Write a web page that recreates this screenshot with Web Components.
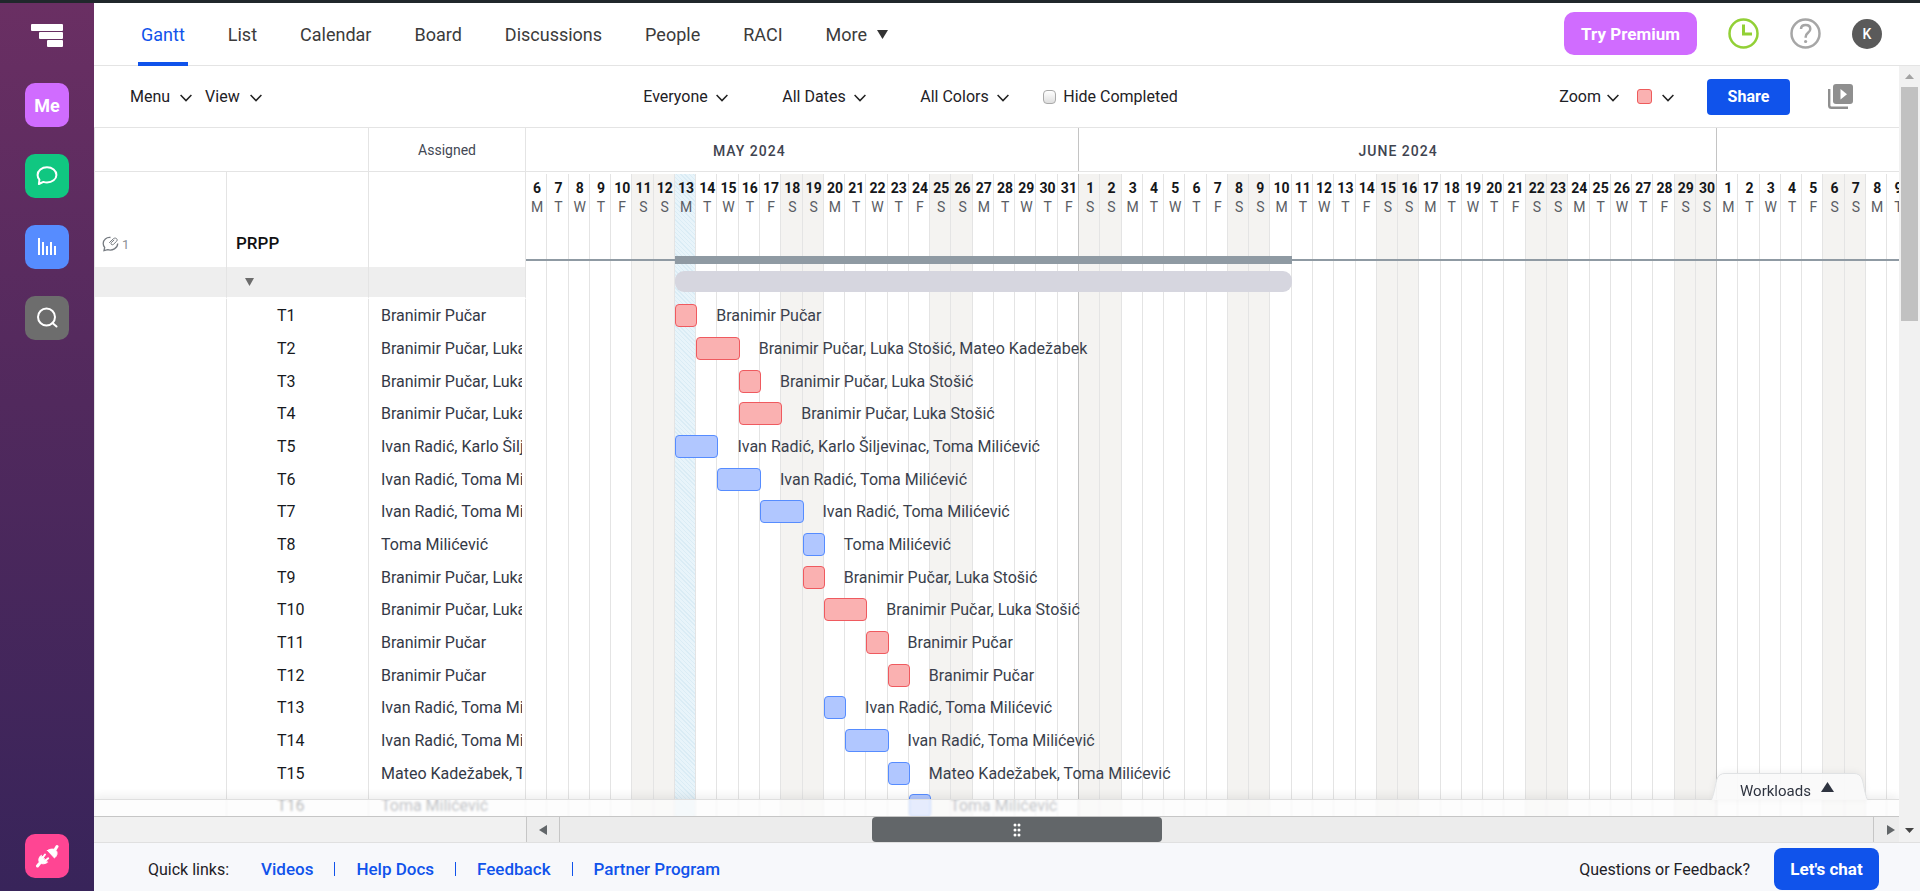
<!DOCTYPE html>
<html lang="en">
<head>
<meta charset="utf-8">
<meta name="viewport" content="width=device-width, initial-scale=1">
<title>PRPP – Gantt</title>
<style>
  html, body { margin: 0; height: 100%; }
  body {
    font-family: Roboto, "Open Sans", sans-serif;
    font-size: 16px;
    color: #2c3038;
    --line: #e4e4e4;
    --line-strong: #c4c4c4;
    --blue: #1053eb;
    --violet: #d06cff;
  }
</style>
</head>
<body>
<app-shell>
  <side-rail slot="rail">
    <rail-item label="My work" style="--tile:#d06cff">Me</rail-item>
    <rail-item label="Discussions" style="--tile:#10c781">
      <svg width="22" height="22" viewBox="0 0 22 22" fill="none" stroke="#fff" stroke-width="2" stroke-linejoin="round"><path d="M3.4 14.6C2.2 13.2 1.6 11.600 1.600 9.900 1.600 5.600 5.800 2.300 11 2.300s9.400 3.300 9.400 7.600-4.200 7.600-9.400 7.600c-1.300 0-2.500-.2-3.600-.6L2.900 19l.5-4.400z"/></svg>
    </rail-item>
    <rail-item label="Workload" style="--tile:#568cff">
      <svg width="20" height="20" viewBox="0 0 20 20" fill="#fff"><path d="M1 1h2v17H1zM5 5h2v13H5zM9 9h2v9H9zM13 5h2v13h-2zM17 9h2v9h-2z"/></svg>
    </rail-item>
    <rail-item label="Search" style="--tile:#6d6d6d">
      <svg width="22" height="22" viewBox="0 0 22 22" fill="none" stroke="#fff" stroke-width="2" stroke-linecap="round"><circle cx="10.500" cy="10" r="8.500"/><path d="M16.500 16l4 3.500"/></svg>
    </rail-item>
    <rail-item slot="end" label="Integrations" style="--tile:#ff4593">
      <svg width="24" height="24" viewBox="0 0 24 24" fill="#fff" stroke="#fff" stroke-width="2" stroke-linecap="round" stroke-linejoin="round"><path d="M12.500 6.500l7 7.500c2.600-2 3.300-5.200 1.800-7.300-1.600-2-5.600-2.300-8.800-.2z" stroke-width="1"/><path d="M20.500 5L22 2.500" stroke-width="3"/><path d="M6 11.500c-2.700 2-2.700 5.700-1.200 7.200s5.200 1.600 7.500-.2z" stroke-width="1"/><path d="M4.500 19.500L2.500 22" stroke-width="3"/><path d="M7.500 14l2.500-3.500M10 17l3.200-2.700"/></svg>
    </rail-item>
  </side-rail>
  <top-nav slot="nav"></top-nav>
  <tool-bar slot="tools"></tool-bar>
  <gantt-board slot="board"></gantt-board>
  <page-footer slot="footer"></page-footer>
</app-shell>

<script>
const RESET = `:host,*,*::before,*::after{box-sizing:border-box}
  button,select{font:inherit;color:inherit;background:none;border:0;padding:0;margin:0;cursor:pointer}
  a{text-decoration:none;color:inherit} svg{display:block;flex:none}`;

function define(name, css, html, setup) {
  const template = document.createElement('template');
  template.innerHTML = `<style>${RESET}${css}</style>${html}`;
  customElements.define(name, class extends HTMLElement {
    constructor() {
      super();
      this.attachShadow({ mode: 'open' }).append(template.content.cloneNode(true));
    }
    connectedCallback() { if (setup) setup(this, this.shadowRoot); }
  });
}

/* ---------- frame ---------- */
define('app-shell', `
  :host{display:flex;flex-direction:column;height:100vh;border-top:3px solid #20272b;overflow:hidden;background:#fff}
  .body{flex:1;min-height:0;display:grid;grid-template-columns:94px minmax(0,1fr)}
  .main{display:flex;flex-direction:column;min-height:0}
  .work{flex:1;min-height:0;display:grid;grid-template-columns:minmax(0,1fr) 21px}
  .pane{display:flex;flex-direction:column;min-height:0}
  slot[name=board]::slotted(*){flex:1;min-height:0}`,
  `<div class="body"><slot name="rail"></slot>
    <div class="main"><slot name="nav"></slot>
      <div class="work"><div class="pane"><slot name="tools"></slot><slot name="board"></slot><time-scroller></time-scroller></div><page-scroller></page-scroller></div>
      <slot name="footer"></slot></div></div>`);

define('side-rail', `
  :host{display:flex;flex-direction:column;align-items:center;padding:21px 0 13px;background:linear-gradient(#6a2f63,#51295d 45%,#38245a)}
  a{margin-bottom:36px}
  nav{display:flex;flex-direction:column;gap:27px}
  .end{margin-top:auto}`,
  `<a href="#" aria-label="Home"><svg width="32" height="23" viewBox="0 0 32 23" fill="#fff"><rect width="32" height="7" rx="1"/><rect x="8" y="8" width="24" height="7" rx="1"/><rect x="16" y="16" width="16" height="7" rx="1"/></svg></a>
   <nav><slot></slot></nav><div class="end"><slot name="end"></slot></div>`);

define('rail-item', `
  :host{display:block}
  button{display:flex;align-items:center;justify-content:center;width:44px;height:44px;border-radius:10px;background:var(--tile);color:#fff;font-size:18px;font-weight:700}`,
  `<button type="button"><slot></slot></button>`,
  (el, root) => root.querySelector('button').setAttribute('aria-label', el.getAttribute('label')));

/* ---------- top navigation ---------- */
define('top-nav', `
  :host{display:flex;justify-content:space-between;height:63px;padding:0 38px 0 44px;border-bottom:1px solid var(--line)}
  nav{display:flex;gap:37px;font-size:18px;color:#3b3b3b}
  nav a,nav button{display:flex;align-items:center;height:63px;padding:0 3px 1px}
  nav a[aria-current]{color:var(--blue);box-shadow:inset 0 -4px var(--blue)}
  nav button{gap:10px}
  .side{display:flex;align-items:center;gap:31px;padding-bottom:1px}
  .premium{height:43px;width:133px;border-radius:10px;background:var(--violet);color:#fff;font-weight:700;font-size:17px}
  .avatar{width:30px;height:30px;border-radius:50%;background:#5a5a5a;color:#fff;font-size:14px;font-weight:500}`,
  `<nav><a href="#" aria-current="page">Gantt</a><a href="#">List</a><a href="#">Calendar</a><a href="#">Board</a><a href="#">Discussions</a><a href="#">People</a><a href="#">RACI</a>
    <button type="button">More <svg width="11" height="9" viewBox="0 0 11 9"><path d="M0 0h11L5.500 9z" fill="#333"/></svg></button></nav>
   <div class="side"><button type="button" class="premium">Try Premium</button>
    <button type="button" aria-label="Time"><svg width="31" height="31" viewBox="0 0 31 31" fill="none" stroke="#92d036" stroke-width="2.500"><circle cx="15.500" cy="15.500" r="14"/><path d="M15.500 6.500v9.500H24" stroke-width="3"/></svg></button>
    <button type="button" aria-label="Help"><svg width="31" height="31" viewBox="0 0 31 31" fill="none" stroke="#a6a6a6" stroke-width="2.500"><circle cx="15.500" cy="15.500" r="14"/><path d="M11 11c0-2.700 2-4 4.700-4s4.600 1.500 4.600 3.900c0 3.900-4.600 3.800-4.600 7.800v1"/><circle cx="15.600" cy="23.500" r="1.600" fill="#a6a6a6" stroke="none"/></svg></button>
    <button type="button" class="avatar">K</button></div>`);

/* ---------- toolbar ---------- */
const CHEVRON = `<svg width="12" height="8" viewBox="0 0 12 8" fill="none" stroke="#222" stroke-width="1.500"><path d="M.6 1L6 6.600 11.400 1"/></svg>`;

define('menu-trigger', `
  :host{display:inline-flex}
  button{display:flex;align-items:center;gap:var(--gap,10px)}
  svg{margin-top:2px}`,
  `<button type="button"><slot></slot>${CHEVRON}</button>`);

define('filter-select', `
  :host{display:inline-grid}
  select{grid-area:1/1;appearance:none;outline:0;padding-right:20px;line-height:20px}
  svg{grid-area:1/1;place-self:center end;margin-top:2px;pointer-events:none}`,
  `<select><option></option></select>${CHEVRON}`,
  (el, root) => {
    root.querySelector('option').textContent = el.getAttribute('value');
    root.querySelector('select').setAttribute('aria-label', el.getAttribute('label'));
  });

define('tool-bar', `
  :host{display:flex;align-items:center;justify-content:space-between;height:62px;padding:0 46px 0 36px;border-bottom:1px solid var(--line);color:#1e2126}
  div{display:flex;align-items:center}
  .left{gap:13px}
  .filters{gap:54px}
  label{display:flex;align-items:center;gap:7px;margin-left:-20px}
  input{appearance:none;width:13px;height:14px;margin:0;border:1px solid #a9a9a9;border-radius:4px;background:linear-gradient(#fff,#dedede)}
  .swatch{width:15px;height:15px;margin:0 10px 0 18px;border:1px solid #ee5b5b;border-radius:3px;background:#fab1b1}
  .share{width:83px;height:36px;margin:0 38px 0 33px;border-radius:4px;background:var(--blue);color:#fff;font-weight:700}
  .zoom{--gap:6px}`,
  `<div class="left"><menu-trigger>Menu</menu-trigger><menu-trigger>View</menu-trigger></div>
   <div class="filters"><filter-select label="People" value="Everyone"></filter-select><filter-select label="Dates" value="All Dates"></filter-select><filter-select label="Colors" value="All Colors"></filter-select>
    <label><input type="checkbox">Hide Completed</label></div>
   <div><menu-trigger class="zoom">Zoom</menu-trigger><span class="swatch"></span><menu-trigger style="--gap:0px" aria-label="Color"></menu-trigger>
    <button type="button" class="share">Share</button>
    <button type="button" aria-label="Presentations"><svg width="25" height="25" viewBox="0 0 25 25"><path d="M1.200 5v16.500c0 1.300.8 2.300 2.300 2.300H20" fill="none" stroke="#8f8f8f" stroke-width="2.400"/><rect x="5" width="20" height="20" rx="3" fill="#8f8f8f"/><path d="M12.500 5v10.500L19 10.200z" fill="#fff"/></svg></button></div>`);

/* ---------- plan data ---------- */
const B = 'Branimir Pučar', L = 'Luka Stošić', M = 'Mateo Kadežabek', I = 'Ivan Radić', K = 'Karlo Šiljevinac', T = 'Toma Milićević';
const TASKS = [ // people, first day column (6 May = 1), days, colour
  [[B], 8, 1, 'red'], [[B, L, M], 9, 2, 'red'], [[B, L], 11, 1, 'red'], [[B, L], 11, 2, 'red'],
  [[I, K, T], 8, 2, 'blue'], [[I, T], 10, 2, 'blue'], [[I, T], 12, 2, 'blue'], [[T], 14, 1, 'blue'],
  [[B, L], 14, 1, 'red'], [[B, L], 15, 2, 'red'], [[B], 17, 1, 'red'], [[B], 18, 1, 'red'],
  [[I, T], 15, 1, 'blue'], [[I, T], 16, 2, 'blue'], [[M, T], 18, 1, 'blue'], [[T], 19, 1, 'blue'],
].map(([people, start, days, color], i) => ({ name: `T${i + 1}`, people: people.join(', '), start, days, color }));

const COMMENT = `<svg width="17" height="16" viewBox="0 0 17 16" fill="none" stroke="#757a80" stroke-width="1.300"><path d="M8.500 1.500C4.500 1 1.200 3.800 1.200 7.500c0 1.600.6 2.900 1.500 4L2 14.700l3.700-1c4.500 1.300 10-1.300 10-6.200"/><path d="M7.200 6.800l4.100-4c2.300-1.900 5 .4 3.400 2.400L11.500 8.300c-1.500 1.300-3.300-.2-2.200-1.700l2.900-2.700" stroke-width="1"/></svg>`;

define('gantt-sheet', `
  :host{display:block;border-left:1px solid var(--line);overflow:hidden}
  table{width:100%;table-layout:fixed;border-collapse:separate;border-spacing:0}
  col.notes{width:132px} col.name{width:142px}
  th,td{padding:0;font-weight:400;text-align:left;white-space:nowrap;border-right:1px solid var(--line)}
  thead th{height:44px;border-bottom:1px solid var(--line);text-align:center;font-size:14px;color:#434854}
  .project td,.project th{height:95px;vertical-align:bottom;padding:0 7px 15px}
  .project th{font-size:17px;font-weight:500;color:#111;padding:0 9px 14px}
  .notes-count{display:flex;align-items:center;gap:3px;font-size:13px;color:#8b8f96}
  .group td{height:32px;background:#eee;border-bottom:2px solid #fff;padding:0 18px}
  .task td,.task th{height:33px}
  .task:nth-child(3n) td,.task:nth-child(3n) th{height:32px}
  .task th{padding-left:50px;color:#17191d}
  .task td:last-child{padding-left:12px}
  .clip{width:141px;overflow:hidden;color:#343946}`,
  `<table><colgroup><col class="notes"><col class="name"><col></colgroup>
    <thead><tr><th colspan="2"></th><th scope="col">Assigned</th></tr></thead>
    <tbody><tr class="project"><td><span class="notes-count">${COMMENT}1</span></td><th scope="row">PRPP</th><td></td></tr>
      <tr class="group"><td></td><td><svg width="9" height="8" viewBox="0 0 9 8"><path d="M0 0h9L4.500 8z" fill="#6c6c6c"/></svg></td><td></td></tr></tbody>
    <tbody class="tasks"></tbody></table>`,
  (el, root) => {
    root.querySelector('.tasks').innerHTML = TASKS.map(t =>
      `<tr class="task"><td></td><th scope="row">${t.name}</th><td><div class="clip">${t.people}</div></td></tr>`).join('');
  });

/* ---------- timeline ---------- */
define('day-column', `
  :host{display:flex;flex-direction:column;align-items:center;padding:5px 0 0 2px;border-right:1px solid var(--line);font-size:14px;line-height:19px;color:#5a5d64;min-width:0}
  :host([weekend]){background:#f4f3f1}
  :host([today]){background:repeating-linear-gradient(45deg,#e8f4fa 0 2px,#daecf5 2px 3px)}
  :host([month-end]){border-right-color:var(--line-strong)}
  b{font-weight:700;color:#15171a}`,
  `<b></b><span></span>`,
  (el, root) => {
    root.querySelector('b').textContent = el.getAttribute('day');
    root.querySelector('span').textContent = el.getAttribute('weekday');
  });

define('task-row', `
  :host{display:grid;grid-template-columns:repeat(65,minmax(0,1fr));align-items:center;height:33px}
  :host(:nth-child(3n)){height:32px}
  .bar{height:23px;margin-right:-1px;border:1px solid #568cff;border-radius:4px;background:#b1c7ff}
  .red{border-color:#ef5a5f;background:#fab1b1}
  .who{white-space:nowrap;padding-left:20px;color:#3a3f4c}`,
  `<div class="bar"></div><div class="who"></div>`,
  (el, root) => {
    const t = TASKS[el.getAttribute('index')];
    const bar = root.querySelector('.bar'), who = root.querySelector('.who');
    bar.classList.add(t.color);
    bar.style.gridColumn = `${t.start} / span ${t.days}`;
    who.style.gridColumn = `${t.start + t.days} / -1`;
    who.textContent = t.people;
  });

define('gantt-timeline', `
  :host{display:block;overflow:hidden;min-width:0}
  .canvas{width:calc(100% * 1300 / 1291);height:100%;display:grid;grid-template-rows:44px minmax(0,1fr)}
  .months,.days,.strip{display:grid;grid-template-columns:repeat(65,minmax(0,1fr))}
  .months{grid-template-rows:43px;border-bottom:1px solid var(--line);font-size:14px;font-weight:500;letter-spacing:1px;color:#3f4450}
  .months>*{grid-row:1}
  .months span{place-self:center;padding-top:3px}
  .may-edge{grid-column:26/27;border-right:1px solid var(--line-strong)}
  .june-edge{grid-column:56/57;border-right:1px solid var(--line-strong)}
  .may{grid-column:1/22}.june{grid-column:27/57}
  .days,.plan{grid-area:2/1;min-height:0}
  .days{padding-top:2px}
  .plan{padding-top:84px;overflow:hidden}
  .strip{height:8px;align-items:center;background:linear-gradient(#8f9aa3,#8f9aa3) 0 3px/100% 2px no-repeat}
  .strip i{grid-column:8/37;height:8px;background:#8f9aa3}
  .group{background:none;height:35px}
  .group i{height:21px;border-radius:9px;background:#d6d6df}`,
  `<div class="canvas">
     <div class="months"><span class="may">MAY 2024</span><i class="may-edge"></i><span class="june">JUNE 2024</span><i class="june-edge"></i></div>
     <div class="days"></div>
     <div class="plan"><div class="strip"><i></i></div><div class="strip group"><i></i></div><div class="rows"></div></div>
   </div>`,
  (el, root) => {
    let html = '';
    for (let i = 0; i < 65; i++) {
      const date = new Date(Date.UTC(2024, 4, 6 + i));
      const day = date.getUTCDate(), wd = date.getUTCDay();
      html += `<day-column day="${day}" weekday="${'SMTWTFS'[wd]}"${wd % 6 ? '' : ' weekend'}${i === 7 ? ' today' : ''}${i === 25 || i === 55 ? ' month-end' : ''}></day-column>`;
    }
    root.querySelector('.days').innerHTML = html;
    root.querySelector('.rows').innerHTML = TASKS.map((t, i) => `<task-row index="${i}"></task-row>`).join('');
  });

define('workload-panel', `
  :host{position:absolute;inset:auto 0 0 0;height:18px;border-top:1px solid #dfdfdf;border-bottom:1px solid #c6c6c6;background:rgba(252,252,252,.7);backdrop-filter:blur(1px);box-shadow:0 -3px 10px rgba(0,0,0,.07)}
  button{position:absolute;right:31px;bottom:100%;width:157px;height:27px;display:grid}
  button>*{grid-area:1/1}
  .label{z-index:1;display:flex;align-items:center;gap:10px;padding:8px 0 0 29px;font-size:15px;color:#2f3440}
  .tab{filter:drop-shadow(0 -1px 3px rgba(0,0,0,.06))}`,
  `<button type="button"><svg class="tab" width="157" height="27" viewBox="0 0 157 27"><path d="M.5 27C4 18 4 12 6 6Q8 .5 14 .5H143Q149 .5 151 6C153 12 153 18 156.500 27" fill="#fbfbfb" fill-opacity=".9" stroke="#e0e2e4"/></svg>
    <span class="label">Workloads <svg width="13" height="10" viewBox="0 0 13 10" style="margin-bottom:7px"><path d="M6.500 0L13 10H0z" fill="#2f3440"/></svg></span></button>`);

define('gantt-board', `
  :host{position:relative;display:grid;grid-template-columns:432px minmax(0,1fr);grid-template-rows:minmax(0,1fr);overflow:hidden}`,
  `<gantt-sheet></gantt-sheet><gantt-timeline></gantt-timeline><workload-panel></workload-panel>`);

/* ---------- scrollers ---------- */
define('time-scroller', `
  :host{display:grid;grid-template-columns:433px 33px minmax(0,1fr) 26px;height:26px;background:#ececec;border-bottom:1px solid #e0e0e0}
  .pad{background:#f1f1f1;border-right:1px solid #c6c6c6}
  button{display:grid;place-items:center}
  .back{border-right:1px solid #c6c6c6}
  .next{border-left:1px solid #c6c6c6}
  .track{display:grid;grid-template-columns:312fr 290fr 711fr}
  .thumb{grid-column:2;display:grid;place-items:center;border-radius:4px;background:#626669}`,
  `<div class="pad"></div><button type="button" class="back" aria-label="Earlier"><svg width="8" height="10" viewBox="0 0 8 10"><path d="M8 0v10L0 5z" fill="#626669"/></svg></button>
   <div class="track"><div class="thumb"><svg width="8" height="14" viewBox="0 0 8 14" fill="#fff"><circle cx="2" cy="2" r="1.500"/><circle cx="6" cy="2" r="1.500"/><circle cx="2" cy="7" r="1.500"/><circle cx="6" cy="7" r="1.500"/><circle cx="2" cy="12" r="1.500"/><circle cx="6" cy="12" r="1.500"/></svg></div></div>
   <button type="button" class="next" aria-label="Later"><svg width="8" height="10" viewBox="0 0 8 10" style="margin-left:8px"><path d="M0 0v10l8-5z" fill="#626669"/></svg></button>`);

define('page-scroller', `
  :host{display:grid;grid-template-rows:21px 234fr 498fr 24px;padding:0 2px;background:#f1f1f1;border-bottom:1px solid #e0e0e0}
  button{display:grid;place-items:center}
  .thumb{background:#c1c1c1}`,
  `<button type="button" aria-label="Scroll up"><svg width="9" height="5" viewBox="0 0 9 5"><path d="M4.500 0L9 5H0z" fill="#a3a3a3"/></svg></button>
   <div class="thumb"></div><div></div>
   <button type="button" aria-label="Scroll down"><svg width="9" height="5" viewBox="0 0 9 5"><path d="M0 0h9L4.500 5z" fill="#444"/></svg></button>`);

/* ---------- footer ---------- */
define('page-footer', `
  :host{display:flex;align-items:center;justify-content:space-between;height:48px;padding:4px 41px 0 54px;background:#f7f8fb;color:#1e2126;white-space:nowrap}
  div{display:flex;align-items:center;gap:24px}
  .links{gap:21px;font-size:17px;font-weight:500;color:var(--blue)}
  p{margin:0}
  .links p{margin-right:11px;font-size:16px;font-weight:400;color:#1e2126}
  .links i{width:1px;height:14px;background:var(--blue)}
  button{width:105px;height:42px;border-radius:8px;background:var(--blue);color:#fff;font-size:17px;font-weight:700}`,
  `<div class="links"><p>Quick links:</p><a href="#">Videos</a><i></i><a href="#">Help Docs</a><i></i><a href="#">Feedback</a><i></i><a href="#">Partner Program</a></div>
   <div><p>Questions or Feedback?</p><button type="button">Let's chat</button></div>`);
</script>
</body>
</html>
